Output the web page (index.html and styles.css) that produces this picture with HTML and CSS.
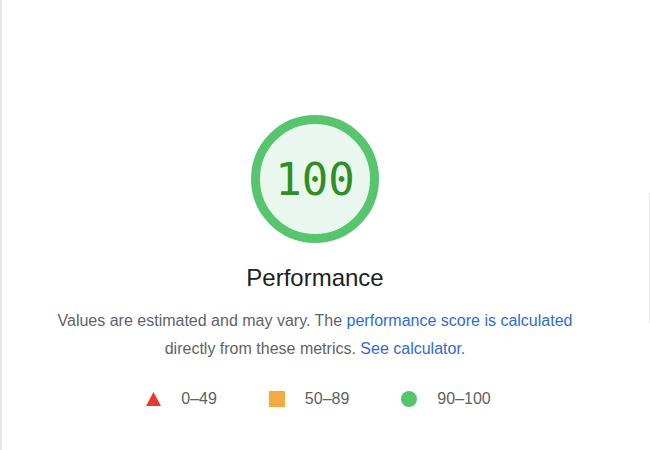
FILE: index.html
```html
<!DOCTYPE html>
<html>
<head>
<meta charset="utf-8">
<link rel="stylesheet" href="styles.css">
</head>
<body>
<div class="page">
  <div class="panel">
    <div class="gauge">
      <svg class="gauge-svg" viewBox="0 0 128 128" width="128" height="128">
        <circle cx="64" cy="64" r="59.5" fill="#eaf7ee" stroke="#57c46e" stroke-width="9"/>
      </svg>
      <div class="gauge-value">100</div>
    </div>
    <div class="title">Performance</div>
    <p class="desc">Values are estimated and may vary. The <a href="#">performance score is calculated</a> directly from these metrics. <a href="#">See calculator.</a></p>
    <div class="legend">
      <div class="legend-item"><svg width="15" height="14" viewBox="0 0 15 14"><polygon points="7.5,0 15,14 0,14" fill="#e53b2f"/></svg><span>0–49</span></div>
      <div class="legend-item"><span class="sq"></span><span>50–89</span></div>
      <div class="legend-item"><span class="dot"></span><span>90–100</span></div>
    </div>
  </div>
  <div class="edge"></div>
</div>
</body>
</html>
```

FILE: styles.css
```css
html, body {
  margin: 0;
  padding: 0;
  background: #ffffff;
}
body {
  font-family: "Liberation Sans", Arial, sans-serif;
  width: 650px;
  height: 450px;
  overflow: hidden;
}
.page {
  display: flex;
  height: 450px;
  border-left: 2px solid #e8e8e8;
  box-sizing: border-box;
}
.panel {
  width: 626px;
  display: flex;
  flex-direction: column;
  align-items: center;
  padding-top: 115px;
}
.edge {
  margin-left: auto;
  margin-top: 193px;
  width: 1px;
  height: 130px;
  background: #e6e6e6;
}
.gauge {
  position: relative;
  width: 128px;
  height: 128px;
}
.gauge-svg {
  display: block;
}
.gauge-value {
  position: absolute;
  inset: 0;
  display: flex;
  align-items: center;
  justify-content: center;
  font-family: "DejaVu Sans Mono", monospace;
  font-size: 44px;
  color: #2f8f24;
}
.title {
  margin-top: 19px;
  font-size: 24px;
  color: #202124;
  line-height: 32px;
}
.desc {
  margin: 13px 0 0;
  text-align: center;
  font-size: 16px;
  line-height: 28px;
  color: #5f6368;
  width: 540px;
}
.desc a {
  color: #2f6bd8;
  text-decoration: none;
}
.legend {
  display: flex;
  gap: 52px;
  margin-top: 27px;
  margin-left: 7px;
  font-size: 16px;
  color: #616161;
}
.legend-item {
  display: flex;
  align-items: center;
  gap: 20px;
}
.sq {
  width: 16px;
  height: 16px;
  background: #f4a942;
}
.dot {
  width: 16px;
  height: 16px;
  border-radius: 50%;
  background: #56c46a;
}
```
